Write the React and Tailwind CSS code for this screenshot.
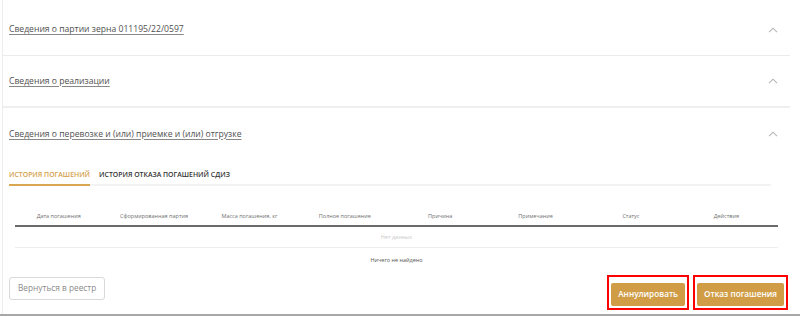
import React from "react";

const Chevron = () => (
  <svg width="10" height="6" viewBox="0 0 10 6" className="mr-[12px]">
    <path d="M1 5.2 L5 1.2 L9 5.2" fill="none" stroke="#b5b5b5" strokeWidth="1.1" />
  </svg>
);

const Section = ({ title, border }) => (
  <div className={`flex items-center justify-between h-[52px] ${border}`}>
    <span className="text-[8.6px] text-[#505050] underline underline-offset-[2px] decoration-[#888] pl-[6px]">{title}</span>
    <Chevron />
  </div>
);

const cols = [
  "Дата погашения",
  "Сформированная партия",
  "Масса погашения, кг",
  "Полное погашение",
  "Причина",
  "Примечание",
  "Статус",
  "Действия",
];

export default function App() {
  return (
    <div className="w-[800px] h-[317px] bg-white overflow-hidden flex flex-col" style={{ fontFamily: '"Open Sans", "Noto Sans", sans-serif' }}>
      <div className="flex-1 flex ml-[2px] border-l border-[#ececec]">
        <div className="w-[787px] flex flex-col pt-[4px]">
          <Section title="Сведения о партии зерна 011195/22/0597" border="border-b border-[#ebebeb]" />
          <Section title="Сведения о реализации" border="border-b-2 border-[#efefef]" />
          <Section title="Сведения о перевозке и (или) приемке и (или) отгрузке" border="" />
          <div className="pl-[6px] pr-[19px]">
            <div className="flex items-end h-[26px] border-b-2 border-[#f3f3f3] gap-[9px]">
              <div className="text-[6.9px] font-semibold text-[#d4a04a] border-b-2 border-[#d9a652] pb-[4px] -mb-[2px]">ИСТОРИЯ ПОГАШЕНИЙ</div>
              <div className="text-[6.9px] font-semibold text-[#333] pb-[4px] -mb-[2px] border-b-2 border-transparent">ИСТОРИЯ ОТКАЗА ПОГАШЕНИЙ СДИЗ</div>
            </div>
          </div>
          <div className="pl-[12px] w-[775px] mt-[22px]">
            <div className="grid grid-cols-8 h-[19px] items-center border-b-2 border-[#6b6b6b]">
              {cols.map((c) => (
                <div key={c} className="text-center pr-[8px] text-[5.5px] text-[#707070]">{c}</div>
              ))}
            </div>
            <div className="h-[21px] flex items-center justify-center border-b border-[#ededed] text-[5.5px] text-[#c8c8c8]">Нет данных</div>
            <div className="h-[25px] flex items-center justify-center text-[5.5px] text-[#555]">Ничего не найдено</div>
          </div>
          <div className="flex items-start justify-between pl-[6px] pr-[2px] mt-[2px]">
            <button className="h-[23px] px-[8px] border border-[#d9d9d9] rounded-[3px] text-[8.3px] text-[#8a8a8a] bg-white mt-[2px]">Вернуться в реестр</button>
            <div className="flex gap-[4px]">
              <div className="border-2 border-[#ff0000] p-[2px]">
                <button className="h-[23px] px-[7px] bg-[#d09d46] text-white text-[8.2px] font-semibold rounded-[2px]">Аннулировать</button>
              </div>
              <div className="border-2 border-[#ff0000] p-[2px]">
                <button className="h-[23px] px-[7px] bg-[#d09d46] text-white text-[8.2px] font-semibold rounded-[2px]">Отказ погашения</button>
              </div>
            </div>
          </div>
        </div>
      </div>
      <div className="h-[2px] bg-[#a8a8a8] mb-[1px]" />
    </div>
  );
}
